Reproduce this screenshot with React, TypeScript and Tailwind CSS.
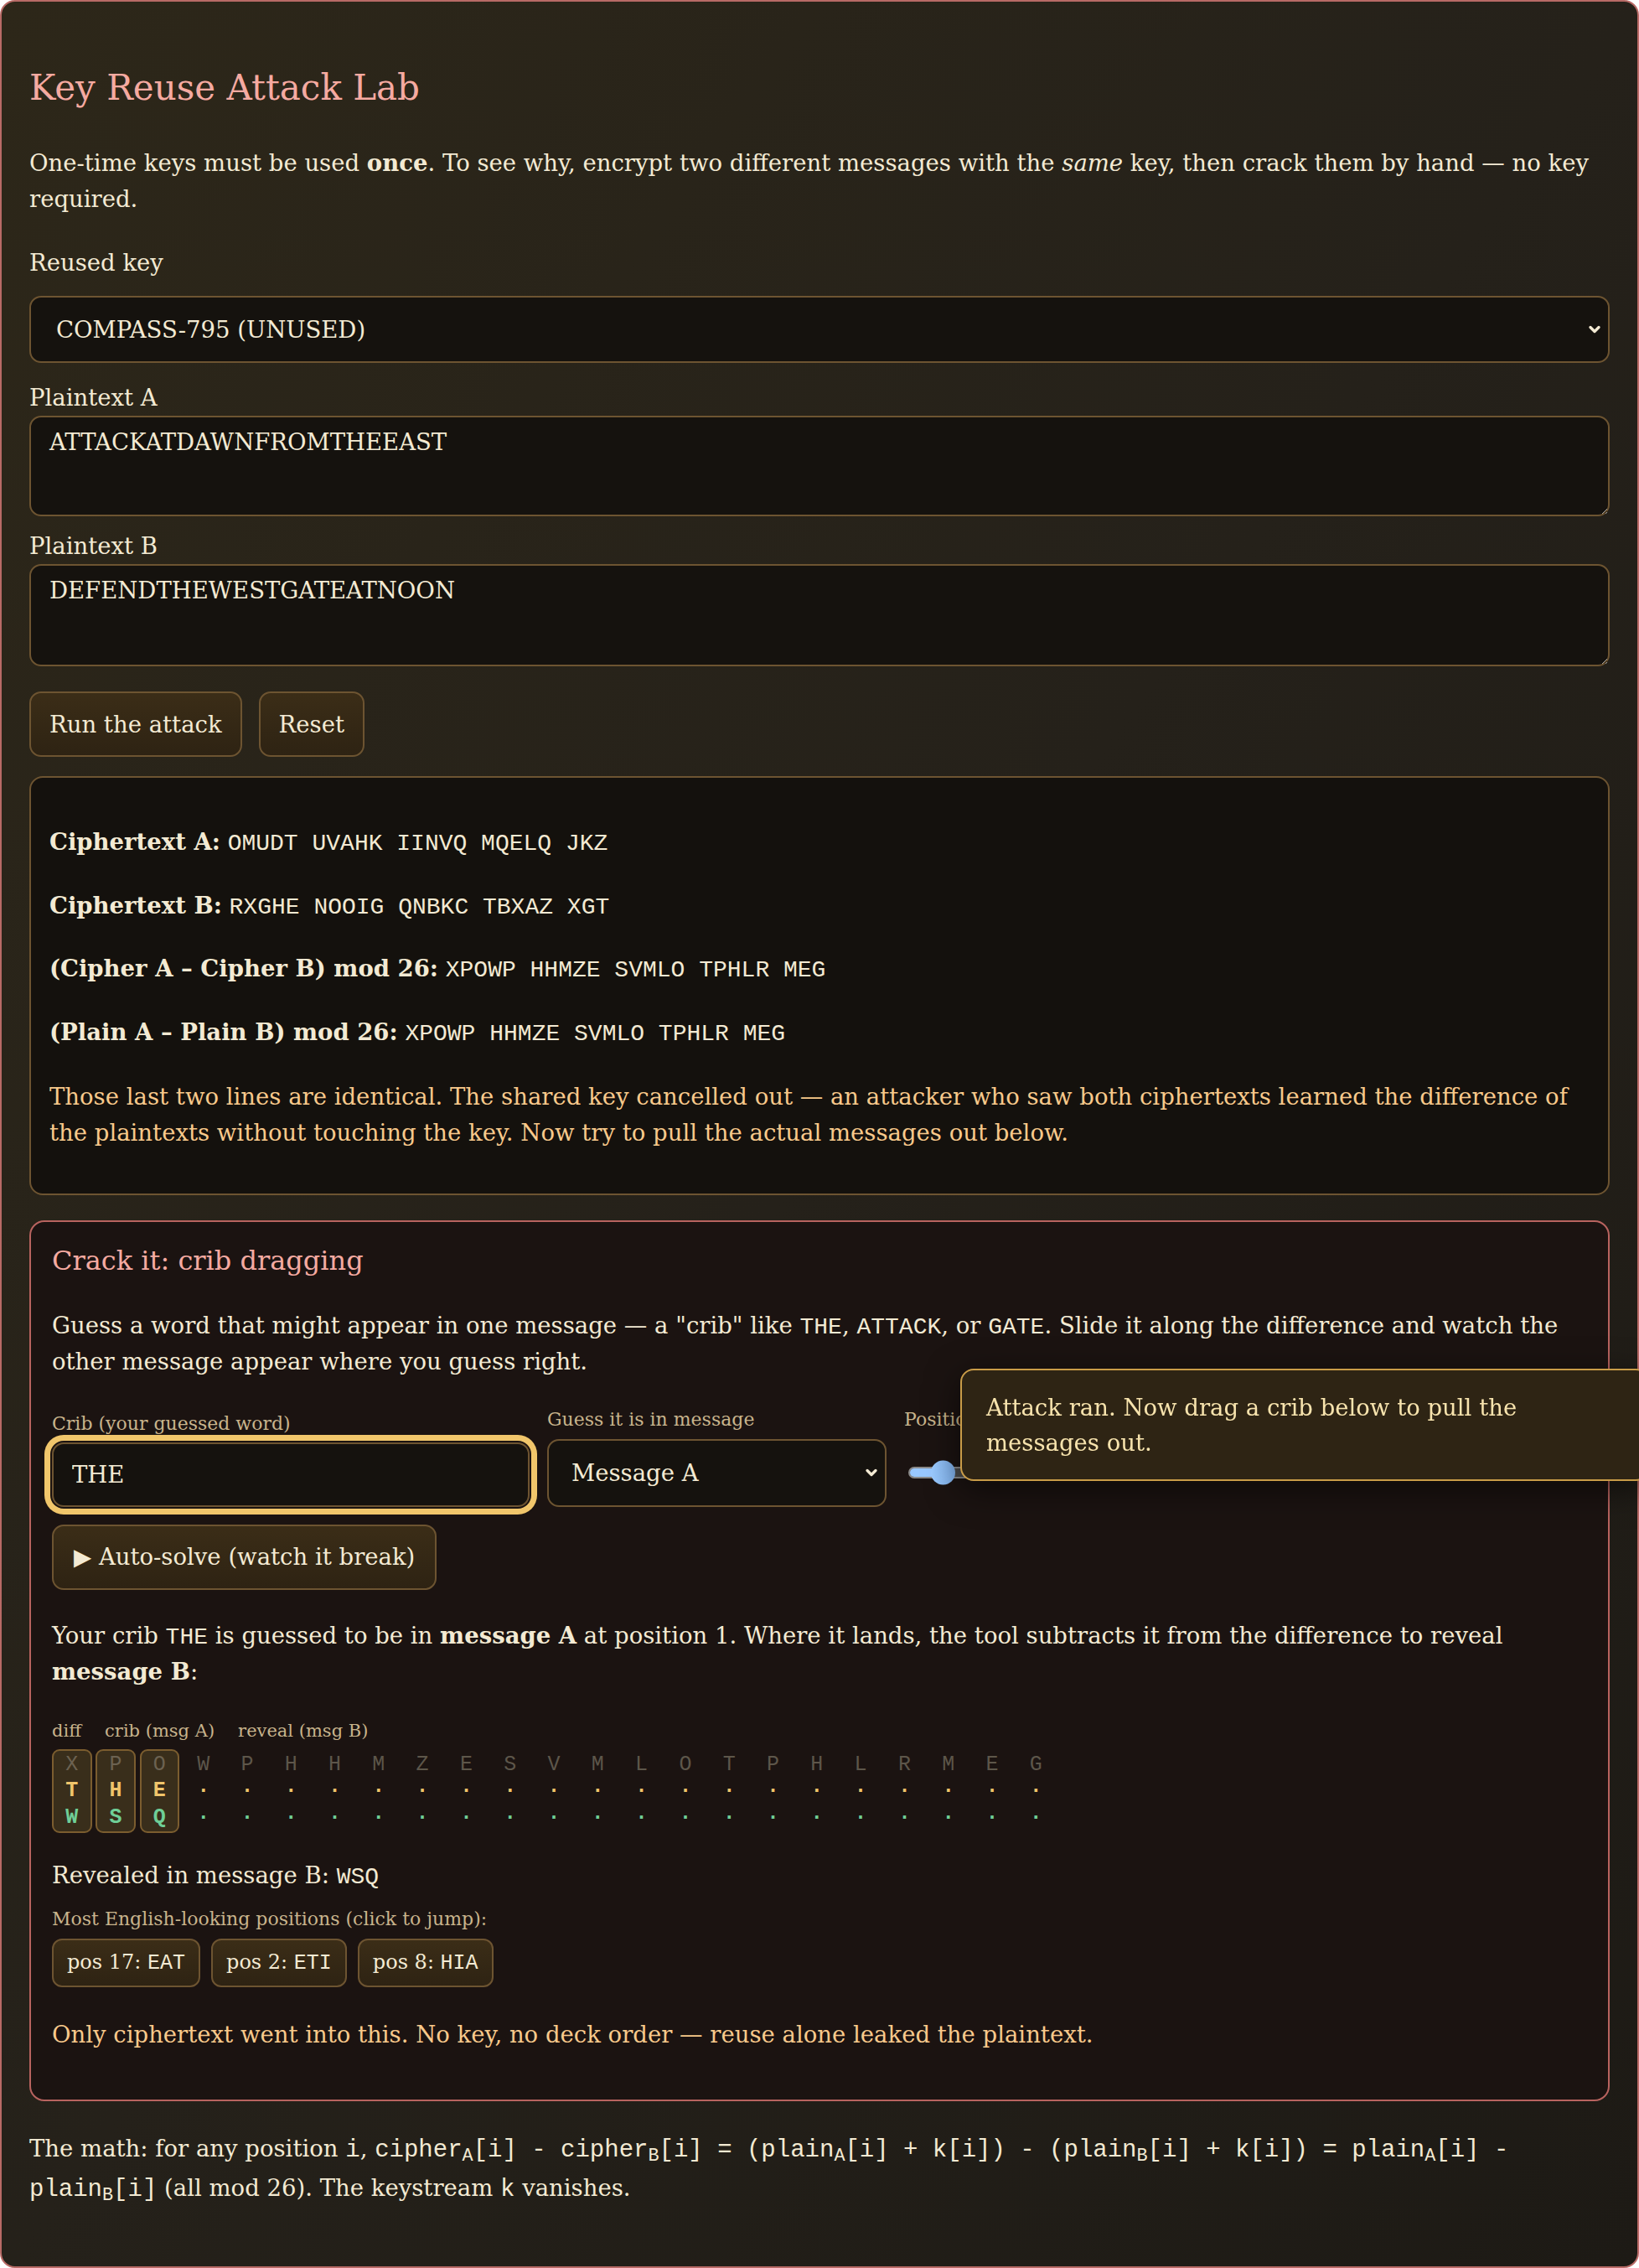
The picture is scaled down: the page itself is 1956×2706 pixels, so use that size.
import React, { useState } from "react";
import { ChevronDown } from "lucide-react";

const MONO = "[font-family:'Liberation_Mono','Courier_New',monospace]";
// inline code keeps line-height at 1 so it never stretches the line box
const CODE = `${MONO} text-[28px] leading-none`;

const CIPHER_A = "OMUDTUVAHKIINVQMQELQJKZ";
const CIPHER_B = "RXGHENOOIGQNBKCTBXAZXGT";
const PLAIN_A = "ATTACKATDAWNFROMTHEEAST";
const PLAIN_B = "DEFENDTHEWESTGATEATNOON";

const CANDIDATES = [
  { pos: 17, text: "EAT" },
  { pos: 2, text: "ETI" },
  { pos: 8, text: "HIA" },
];

const toNum = (c: string) => c.charCodeAt(0) - 65;
const toChar = (n: number) => String.fromCharCode((((n % 26) + 26) % 26) + 65);

const subtract = (a: string, b: string) =>
  a
    .split("")
    .map((c, i) => toChar(toNum(c) - toNum(b[i])))
    .join("");

const groups = (s: string) => s.match(/.{1,5}/g)?.join(" ") ?? "";

const Chevron = () => (
  <ChevronDown
    className="pointer-events-none absolute right-[8px] top-1/2 -translate-y-1/2 w-[20px] h-[20px] text-[#f3ead3]"
    strokeWidth={4}
  />
);

const CribGrid = ({ diff, crib, pos }: { diff: string; crib: string; pos: number }) => {
  const start = pos - 1;
  return (
    <div className="flex gap-[4.8px]">
      {diff.split("").map((d, i) => {
        const hit = i >= start && i < start + crib.length;
        const c = hit ? crib[i - start] : null;
        const r = c ? toChar(toNum(c) - toNum(d)) : null;
        return (
          <div
            key={i}
            className={`w-[47.5px] py-[1px] flex flex-col items-center rounded-[9px] border-2 ${MONO} text-[25px] ${
              hit ? "border-[#7b5d2f] bg-[#392e1b]" : "border-transparent"
            }`}
          >
            <span className={`h-[31.5px] leading-[31.5px] ${hit ? "text-[#6c6251]" : "text-[#5d564a]"}`}>{d}</span>
            <span className="h-[31.5px] leading-[31.5px] font-bold text-[#f0c56b]">{c ?? "·"}</span>
            <span className="h-[31.5px] leading-[31.5px] font-bold text-[#6fcf97]">{r ?? "·"}</span>
          </div>
        );
      })}
    </div>
  );
};

export default function App() {
  const [crib, setCrib] = useState("THE");
  const [pos] = useState(1);

  const diffCipher = subtract(CIPHER_A, CIPHER_B);
  const diffPlain = subtract(PLAIN_A, PLAIN_B);
  const revealed = crib
    .split("")
    .map((c, i) => toChar(toNum(c) - toNum(diffCipher[pos - 1 + i])))
    .join("");

  const btn =
    "h-[78px] px-[22px] rounded-[14px] border-2 border-[#6d5431] bg-linear-to-b from-[#3b2d17] to-[#2e2313] text-[27.5px] text-[#f3ead3]";

  return (
    <div className="min-h-screen rounded-[18px] border-2 border-[#b86a66] bg-linear-to-br from-[#2d2719] via-[#25211a] to-[#1d1a15] px-[33px] pt-[75px] pb-[60px] text-[27.5px] leading-[43px] text-[#f3ead3] [font-family:'DejaVu_Serif',serif] [color-scheme:dark]">
      <h2 className="text-[42px] leading-[55px] font-normal text-[#f5aaa1]">Key Reuse Attack Lab</h2>

      <p className="mt-[41px]">
        One-time keys must be used <strong>once</strong>. To see why, encrypt two different messages with the{" "}
        <em>same</em> key, then crack them by hand — no key required.
      </p>

      <label className="block mt-[33px]">Reused key</label>
      <div className="relative mt-[18px]">
        <select className="appearance-none w-full h-[80px] rounded-[14px] border-2 border-[#6d5431] bg-[#15120e] pl-[30px] text-[27.5px] text-[#f3ead3]">
          <option>COMPASS-795 (UNUSED)</option>
        </select>
        <Chevron />
      </div>

      <label className="block mt-[19.5px]">Plaintext A</label>
      <textarea
        className="block w-full h-[120px] rounded-[14px] border-2 border-[#6d5431] bg-[#15120e] px-[22px] py-[8px] text-[27.5px] leading-[43px] text-[#f3ead3]"
        defaultValue={PLAIN_A}
      />

      <label className="block mt-[14.5px]">Plaintext B</label>
      <textarea
        className="block w-full h-[122px] rounded-[14px] border-2 border-[#6d5431] bg-[#15120e] px-[22px] py-[8px] text-[27.5px] leading-[43px] text-[#f3ead3]"
        defaultValue={PLAIN_B}
      />

      <div className="mt-[30px] flex gap-[20px]">
        <button className={btn}>Run the attack</button>
        <button className={btn}>Reset</button>
      </div>

      {/* attack output */}
      <div className="mt-[23px] rounded-[16px] border-2 border-[#6d5431] bg-[#14110d] px-[22px] pt-[55px] pb-[51px]">
        <p>
          <strong>Ciphertext A:</strong> <span className={CODE}>{groups(CIPHER_A)}</span>
        </p>
        <p className="mt-[32.5px]">
          <strong>Ciphertext B:</strong> <span className={CODE}>{groups(CIPHER_B)}</span>
        </p>
        <p className="mt-[32.5px]">
          <strong>(Cipher A – Cipher B) mod 26:</strong> <span className={CODE}>{groups(diffCipher)}</span>
        </p>
        <p className="mt-[32.5px]">
          <strong>(Plain A – Plain B) mod 26:</strong> <span className={CODE}>{groups(diffPlain)}</span>
        </p>
        <p className="mt-[34px] text-[#f8c98b]">
          Those last two lines are identical. The shared key cancelled out — an attacker who saw both ciphertexts
          learned the difference of the plaintexts without touching the key. Now try to pull the actual messages out
          below.
        </p>
      </div>

      {/* crib dragging */}
      <div className="mt-[30px] rounded-[18px] border-2 border-[#b8635f] bg-[#1b1311] px-[25px] pt-[26px] pb-[56px]">
        <h3 className="text-[32px] leading-[40px] font-normal text-[#f5aaa1]">Crack it: crib dragging</h3>
        <p className="mt-[36.5px]">
          Guess a word that might appear in one message — a "crib" like <span className={CODE}>THE</span>,{" "}
          <span className={CODE}>ATTACK</span>, or <span className={CODE}>GATE</span>. Slide it along the difference
          and watch the other message appear where you guess right.
        </p>

        <div className="mt-[29.5px] flex items-end gap-[21px]">
          <div className="w-[570px]">
            <label className="block mb-[4px] text-[22px] leading-[36px] text-[#c8b48c]">Crib (your guessed word)</label>
            <input
              value={crib}
              onChange={(e) => setCrib(e.target.value.toUpperCase())}
              className="block w-full h-[77px] rounded-[14px] border-2 border-[#6d5431] bg-[#15120e] px-[22px] text-[27.5px] text-[#f3ead3] shadow-[0_0_0_2px_#1b1311,0_0_0_9px_#f1c66b] outline-none"
            />
          </div>
          <div className="w-[405px]">
            <label className="block mb-[5px] text-[22px] leading-[36px] text-[#c8b48c]">Guess it is in message</label>
            <div className="relative">
              <select className="appearance-none w-full h-[81px] rounded-[14px] border-2 border-[#6d5431] bg-[#15120e] pl-[27px] text-[27.5px] text-[#f3ead3]">
                <option>Message A</option>
                <option>Message B</option>
              </select>
              <Chevron />
            </div>
          </div>
          <div className="flex-1">
            <label className="block mb-[5px] text-[22px] leading-[36px] text-[#c8b48c]">Position: {pos}</label>
            <div className="h-[81px] flex items-center pl-[5px]">
              <div className="relative w-full h-[14px] rounded-full border-2 border-[#8a8a8a] bg-[#4b4b4b]">
                <div className="absolute left-0 top-0 h-full w-[40px] rounded-full bg-[#99c8ff]" />
                <div className="absolute left-[25px] top-1/2 -translate-y-1/2 w-[29px] h-[29px] rounded-full bg-linear-to-r from-[#9ccbff] to-[#7fb0ea]" />
              </div>
            </div>
          </div>
        </div>

        <button className={`mt-[21px] ${btn} px-[24px]`}>▶ Auto-solve (watch it break)</button>

        <p className="mt-[33.5px]">
          Your crib <span className={CODE}>{crib}</span> is guessed to be in <strong>message A</strong> at position{" "}
          {pos}. Where it lands, the tool subtracts it from the difference to reveal <strong>message B</strong>:
        </p>

        <div className="mt-[30.5px] flex gap-[28px] text-[21px] leading-[36px] text-[#c8b48c]">
          <span>diff</span>
          <span>crib (msg A)</span>
          <span>reveal (msg B)</span>
        </div>
        <div className="mt-[4px]">
          <CribGrid diff={diffCipher} crib={crib} pos={pos} />
        </div>

        <p className="mt-[29px]">
          Revealed in message B: <span className={CODE}>{revealed}</span>
        </p>
        <p className="mt-[12.7px] text-[22px] leading-[36px] text-[#c8b48c]">
          Most English-looking positions (click to jump):
        </p>
        <div className="mt-[5px] flex gap-[13px]">
          {CANDIDATES.map((c) => (
            <button
              key={c.pos}
              className="h-[58px] px-[16px] rounded-[12px] border-2 border-[#6d5431] bg-linear-to-b from-[#3b2d17] to-[#2e2313] text-[24px] text-[#f3ead3]"
            >
              pos {c.pos}: <span className={`${MONO} text-[25px]`}>{c.text}</span>
            </button>
          ))}
        </div>

        <p className="mt-[35px] text-[#f8c98b]">
          Only ciphertext went into this. No key, no deck order — reuse alone leaked the plaintext.
        </p>
      </div>

      <p className="mt-[33px] leading-[47px]">
        The math: for any position <code className={`${MONO} text-[29px] leading-none`}>i</code>,{" "}
        <code className={`${MONO} text-[29px] leading-none`}>
          cipher<sub>A</sub>[i] - cipher<sub>B</sub>[i] = (plain<sub>A</sub>[i] + k[i]) - (plain<sub>B</sub>[i] + k[i]) =
          plain<sub>A</sub>[i] - plain<sub>B</sub>[i]
        </code>{" "}
        (all mod 26). The keystream <code className={`${MONO} text-[29px] leading-none`}>k</code> vanishes.
      </p>

      {/* status toast */}
      <div className="fixed left-[1146px] top-[1633px] w-[822px] z-20 rounded-[16px] border-2 border-[#c99c48] bg-[#2e2414] px-[29px] py-[23px] text-[27.5px] leading-[42px] text-[#f7e3ad] shadow-[0_10px_40px_rgba(0,0,0,0.55)]">
        Attack ran. Now drag a crib below to pull the messages out.
      </div>
    </div>
  );
}
